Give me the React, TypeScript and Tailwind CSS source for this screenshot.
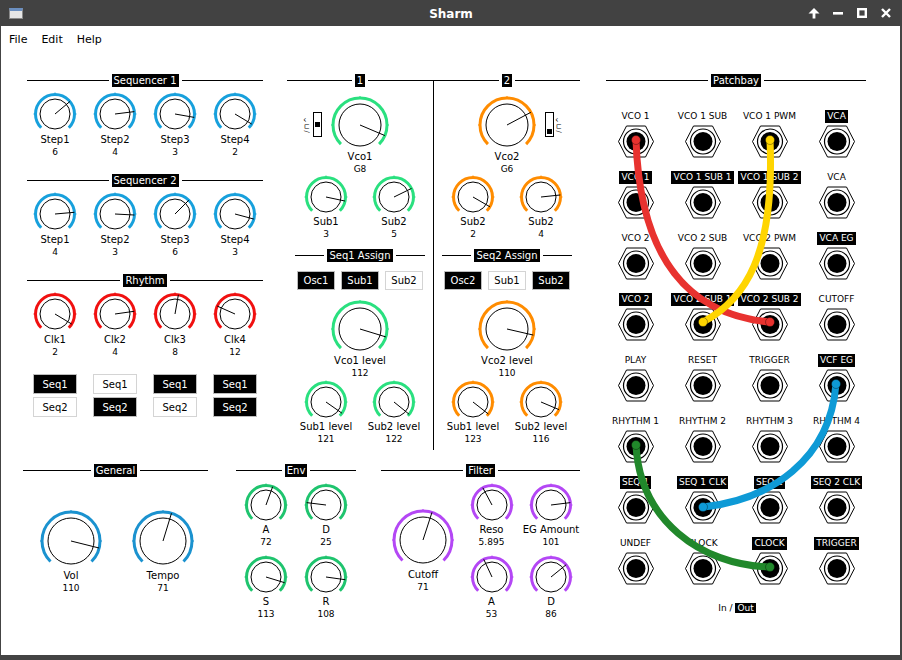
import React from "react";

type Size = "s" | "m" | "l";

const DIM: Record<Size, { R: number; r: number; w: number; c: number; h: number }> = {
  s: { R: 19.5, r: 15, w: 46, c: 23, h: 42 },
  m: { R: 27, r: 21, w: 60, c: 30, h: 56 },
  l: { R: 29, r: 23, w: 66, c: 33, h: 62 },
};

const BLUE = "#17a0dc";
const BLUE2 = "#1b92cf";
const RED = "#f01010";
const GREEN = "#2ae07f";
const GREEN2 = "#1fc46e";
const ORANGE = "#ff8c00";
const PURPLE = "#b447f5";

function Dial({ size, color, angle, h }: { size: Size; color: string; angle: number; h?: number }) {
  const { R, r, w, c } = DIM[size];
  const cx = w / 2;
  const k = R * Math.SQRT1_2;
  const a = (angle * Math.PI) / 180;
  return (
    <svg width={w} height={h ?? DIM[size].h} className="block">
      <path
        d={`M ${cx - k} ${c + k} A ${R} ${R} 0 1 1 ${cx + k} ${c + k}`}
        fill="none"
        stroke={color}
        strokeWidth={3}
      />
      {[180, 90, 0].map((t) => {
        const tr = (t * Math.PI) / 180;
        return (
          <line
            key={t}
            x1={cx + (R + 1) * Math.cos(tr)}
            y1={c - (R + 1) * Math.sin(tr)}
            x2={cx + (R + 2) * Math.cos(tr)}
            y2={c - (R + 2) * Math.sin(tr)}
            stroke={color}
            strokeWidth={1}
          />
        );
      })}
      <circle cx={cx} cy={c} r={r} fill="none" stroke="#000" />
      <line x1={cx} y1={c} x2={cx + R * Math.cos(a)} y2={c - R * Math.sin(a)} stroke="#000" />
    </svg>
  );
}

function Knob({
  label,
  value,
  angle,
  color,
  size = "s",
  h,
  className = "w-[60px]",
}: {
  label: string;
  value: string;
  angle: number;
  color: string;
  size?: Size;
  h?: number;
  className?: string;
}) {
  return (
    <div className={"flex flex-col items-center " + className}>
      <Dial size={size} color={color} angle={angle} h={h} />
      <div className="text-[10px] leading-[12px] whitespace-nowrap">{label}</div>
      <div className="text-[9px] leading-[12px]">{value}</div>
    </div>
  );
}

function Header({ title, className = "" }: { title: string; className?: string }) {
  return (
    <div className={"flex items-center h-[13px] " + className}>
      <div className="flex-1 h-px bg-black" />
      <span className="bg-black text-white text-[10px] leading-[13px] px-[2px] mx-[3px] whitespace-nowrap">
        {title}
      </span>
      <div className="flex-1 h-px bg-black" />
    </div>
  );
}

function Btn({ text, on, className }: { text: string; on: boolean; className: string }) {
  return (
    <div
      className={
        "flex items-center justify-center text-[10px] border " +
        (on ? "bg-black text-white border-[#bdbdbd] " : "bg-white text-black border-[#d4d4d4] ") +
        className
      }
    >
      {text}
    </div>
  );
}

function Switch({ bottom, side }: { bottom?: boolean; side: "l" | "r" }) {
  const marks = (
    <span className="[writing-mode:vertical-rl] rotate-180 text-[7px] leading-[7px] tracking-[1px]">/⊓^</span>
  );
  return (
    <div className="flex items-center gap-[2px]">
      {side === "l" && marks}
      <div className="w-[9px] h-[25px] border border-black flex flex-col items-center">
        <div className={"w-[5px] h-[5px] bg-black " + (bottom ? "mt-auto mb-[2px]" : "mt-[9px]")} />
      </div>
      {side === "r" && marks}
    </div>
  );
}

function Jack() {
  return (
    <svg width={40} height={35} className="block mt-[1px]">
      <polygon points="2.5,17.5 10.5,2 29.5,2 37.5,17.5 29.5,33 10.5,33" fill="#fff" stroke="#000" />
      <circle cx={20} cy={17.5} r={12.5} fill="#fff" stroke="#000" strokeWidth={1.2} />
      <circle cx={20} cy={17.5} r={9.5} fill="#000" />
    </svg>
  );
}

const SEQ1: [string, string, number][] = [
  ["Step1", "6", 40],
  ["Step2", "4", 7],
  ["Step3", "3", -10],
  ["Step4", "2", -31],
];
const SEQ2: [string, string, number][] = [
  ["Step1", "4", 5],
  ["Step2", "3", -3],
  ["Step3", "6", 45],
  ["Step4", "3", -15],
];
const CLK: [string, string, number][] = [
  ["Clk1", "2", -31],
  ["Clk2", "4", 8],
  ["Clk3", "8", 80],
  ["Clk4", "12", 156],
];

const PATCH: [string, boolean][][] = [
  [["VCO 1", false], ["VCO 1 SUB", false], ["VCO 1 PWM", false], ["VCA", true]],
  [["VCO 1", true], ["VCO 1 SUB 1", true], ["VCO 1 SUB 2", true], ["VCA", false]],
  [["VCO 2", false], ["VCO 2 SUB", false], ["VCO 2 PWM", false], ["VCA EG", true]],
  [["VCO 2", true], ["VCO 2 SUB 1", true], ["VCO 2 SUB 2", true], ["CUTOFF", false]],
  [["PLAY", false], ["RESET", false], ["TRIGGER", false], ["VCF EG", true]],
  [["RHYTHM 1", false], ["RHYTHM 2", false], ["RHYTHM 3", false], ["RHYTHM 4", false]],
  [["SEQ 1", true], ["SEQ 1 CLK", true], ["SEQ 2", true], ["SEQ 2 CLK", true]],
  [["UNDEF", false], ["CLOCK", false], ["CLOCK", true], ["TRIGGER", true]],
];

const CABLES = [
  { c: "#e8322f", d: "M636 140 C640 260 690 315 770 322", a: [636, 140], b: [770, 322] },
  { c: "#ffd500", d: "M770 140 C775 255 745 300 703 322", a: [770, 140], b: [703, 322] },
  { c: "#0e9ad6", d: "M836 384 C830 460 770 500 703 507", a: [836, 384], b: [703, 507] },
  { c: "#21882b", d: "M636 445 C640 520 700 565 770 567", a: [636, 445], b: [770, 567] },
];

function KnobRow({ items, color }: { items: [string, string, number][]; color: string }) {
  return (
    <div className="grid grid-cols-4 mt-[4px]">
      {items.map(([l, v, a], i) => (
        <Knob key={i} label={l} value={v} angle={a} color={color} h={43} />
      ))}
    </div>
  );
}

function Osc({
  n,
  color,
  vco,
  subs,
  assign,
  levels,
}: {
  n: string;
  color: string;
  vco: [string, string, number];
  subs: [string, string, number][];
  assign: [string, boolean][];
  levels: [string, string, number][];
}) {
  const left = n === "1";
  return (
    <div className="w-[146px] flex flex-col">
      <Header title={n} />
      <div className="flex mt-[8px]">
        <div className="w-[43px] flex justify-end items-start pt-[17px] pr-[8px]">
          {left && <Switch side="l" />}
        </div>
        <Knob label={vco[0]} value={vco[1]} angle={vco[2]} color={color} size="m" />
        <div className="w-[43px] flex items-start pt-[17px] pl-[8px]">{!left && <Switch side="r" bottom />}</div>
      </div>
      <div className="flex justify-center gap-[8px] mt-[-1px]">
        {subs.map(([l, v, a], i) => (
          <Knob key={i} label={l} value={v} angle={a} color={color} />
        ))}
      </div>
      <Header title={`Seq${n} Assign`} className="mt-[9px] mx-[8px]" />
      <div className="flex gap-[6px] pl-[10px] mt-[9px]">
        {assign.map(([t, on], i) => (
          <Btn key={i} text={t} on={on} className="w-[38px] h-[19px]" />
        ))}
      </div>
      <div className="flex justify-center mt-[9px]">
        <Knob label={levels[0][0]} value={levels[0][1]} angle={levels[0][2]} color={color} size="m" />
      </div>
      <div className="flex justify-center gap-[8px]">
        {levels.slice(1).map(([l, v, a], i) => (
          <Knob key={i} label={l} value={v} angle={a} color={color} />
        ))}
      </div>
    </div>
  );
}

export default function App() {
  return (
    <div className="relative w-[902px] h-[660px] bg-white overflow-hidden font-['DejaVu_Sans',sans-serif] text-black shadow-[inset_1px_0_0_#444,inset_-2px_0_0_#444]">
      {/* title bar */}
      <div className="h-[26px] bg-[#424242] grid grid-cols-[1fr_auto_1fr] items-center">
        <div className="pl-[9px]">
          <div className="w-[14px] h-[11px] bg-[#e6e6e6] border border-[#8a8a8a] border-t-[3px] border-t-[#6b8fc0]" />
        </div>
        <div className="text-white font-bold text-[12px] pt-[1px]">Sharm</div>
        <div className="flex justify-end pr-[4px] text-white">
          <div className="w-[24px] flex justify-center">
            <svg width="12" height="12" viewBox="0 0 12 12">
              <polygon points="6,1 0.5,6.5 11.5,6.5" fill="#fff" />
              <rect x="4.6" y="6" width="2.8" height="5.5" fill="#fff" />
            </svg>
          </div>
          <div className="w-[24px] flex justify-center">
            <svg width="12" height="12" viewBox="0 0 12 12">
              <rect x="1" y="5" width="10" height="2.6" fill="#fff" />
            </svg>
          </div>
          <div className="w-[24px] flex justify-center">
            <svg width="12" height="12" viewBox="0 0 12 12">
              <rect x="2.2" y="2.2" width="7.6" height="7.6" fill="none" stroke="#fff" strokeWidth="2.4" />
            </svg>
          </div>
          <div className="w-[24px] flex justify-center">
            <svg width="12" height="12" viewBox="0 0 12 12">
              <path d="M2 2 L10 10 M10 2 L2 10" stroke="#fff" strokeWidth="2.4" />
            </svg>
          </div>
        </div>
      </div>

      {/* menu */}
      <div className="h-[26px] flex items-center pl-[2px] pt-[2px] text-[11px]">
        <span className="px-[7px]">File</span>
        <span className="px-[7px]">Edit</span>
        <span className="px-[7px]">Help</span>
      </div>

      <div className="flex pt-[22px]">
        <div className="ml-[23px] w-[557px] flex flex-col">
          <div className="flex h-[376px]">
            {/* sequencers and rhythm */}
            <div className="ml-[2px] w-[240px] flex flex-col">
              <Header title="Sequencer 1" className="mx-[2px]" />
              <KnobRow items={SEQ1} color={BLUE} />
              <Header title="Sequencer 2" className="mx-[2px] mt-[16px]" />
              <KnobRow items={SEQ2} color={BLUE} />
              <Header title="Rhythm" className="mx-[2px] mt-[16px]" />
              <KnobRow items={CLK} color={RED} />
              <div className="grid grid-cols-4 mt-[16px]">
                {[true, false, true, true].map((on, i) => (
                  <div key={i} className="flex justify-center">
                    <Btn text="Seq1" on={on} className="w-[44px] h-[20px]" />
                  </div>
                ))}
              </div>
              <div className="grid grid-cols-4 mt-[3px]">
                {[false, true, false, true].map((on, i) => (
                  <div key={i} className="flex justify-center">
                    <Btn text="Seq2" on={on} className="w-[44px] h-[20px]" />
                  </div>
                ))}
              </div>
            </div>

            {/* oscillators */}
            <div className="ml-[22px] flex">
              <Osc
                n="1"
                color={GREEN}
                vco={["Vco1", "G8", -23]}
                subs={[
                  ["Sub1", "3", -12],
                  ["Sub2", "5", 26],
                ]}
                assign={[
                  ["Osc1", true],
                  ["Sub1", true],
                  ["Sub2", false],
                ]}
                levels={[
                  ["Vco1 level", "112", -17],
                  ["Sub1 level", "121", -35],
                  ["Sub2 level", "122", -39],
                ]}
              />
              <div className="w-px h-[370px] bg-black mt-[6px]" />
              <Osc
                n="2"
                color={ORANGE}
                vco={["Vco2", "G6", 28]}
                subs={[
                  ["Sub2", "2", -30],
                  ["Sub2", "4", 6],
                ]}
                assign={[
                  ["Osc2", true],
                  ["Sub1", false],
                  ["Sub2", true],
                ]}
                levels={[
                  ["Vco2 level", "110", -13],
                  ["Sub1 level", "123", -38],
                  ["Sub2 level", "116", -23],
                ]}
              />
            </div>
          </div>

          {/* bottom row */}
          <div className="flex mt-[14px]">
            <div className="w-[185px] flex flex-col">
              <Header title="General" />
              <div className="flex pl-[13px] gap-[22px] mt-[31px]">
                <Knob label="Vol" value="110" angle={-14} color={BLUE2} size="l" className="w-[70px]" />
                <Knob label="Tempo" value="71" angle={73} color={BLUE2} size="l" className="w-[70px]" />
              </div>
            </div>
            <div className="ml-[28px] w-[120px] flex flex-col">
              <Header title="Env" />
              <div className="grid grid-cols-2 gap-y-[6px] mt-[5px]">
                <Knob label="A" value="72" angle={70} color={GREEN2} />
                <Knob label="D" value="25" angle={173} color={GREEN2} />
                <Knob label="S" value="113" angle={-17} color={GREEN2} />
                <Knob label="R" value="108" angle={-8} color={GREEN2} />
              </div>
            </div>
            <div className="ml-[25px] w-[199px] flex flex-col">
              <Header title="Filter" />
              <div className="flex">
                <div className="ml-[7px] mt-[30px]">
                  <Knob label="Cutoff" value="71" angle={72} color={PURPLE} size="l" className="w-[70px]" />
                </div>
                <div className="ml-[3px] mt-[5px] grid grid-cols-2 gap-y-[6px]">
                  <Knob label="Reso" value="5.895" angle={118} color={PURPLE} className="w-[61px]" />
                  <Knob label="EG Amount" value="101" angle={7} color={PURPLE} className="w-[61px]" />
                  <Knob label="A" value="53" angle={115} color={PURPLE} className="w-[61px]" />
                  <Knob label="D" value="86" angle={39} color={PURPLE} className="w-[61px]" />
                </div>
              </div>
            </div>
          </div>
        </div>

        {/* patchbay */}
        <div className="ml-[22px] w-[268px] flex flex-col">
          <Header title="Patchbay" className="mx-[4px]" />
          <div className="grid grid-cols-4 gap-y-[12px] mt-[23px]">
            {PATCH.flat().map(([t, boxed], i) => (
              <div key={i} className="flex flex-col items-center">
                <span
                  className={
                    "text-[9px] leading-[13px] h-[13px] whitespace-nowrap " +
                    (boxed ? "bg-black text-white px-[2px]" : "")
                  }
                >
                  {t}
                </span>
                <Jack />
              </div>
            ))}
          </div>
          <div className="mt-[16px] text-center text-[9px] leading-[13px] pl-[2px]">
            In / <span className="bg-black text-white px-[2px]">Out</span>
          </div>
        </div>
      </div>

      {/* patch cables */}
      <svg className="absolute left-0 top-0 pointer-events-none" width={902} height={660}>
        {CABLES.map((cb, i) => (
          <g key={i}>
            <path d={cb.d} fill="none" stroke={cb.c} strokeWidth={7} strokeLinecap="round" />
            <circle cx={cb.a[0]} cy={cb.a[1]} r={4.5} fill={cb.c} stroke="#00000055" />
            <circle cx={cb.b[0]} cy={cb.b[1]} r={4.5} fill={cb.c} stroke="#00000055" />
          </g>
        ))}
      </svg>

      <div className="absolute left-0 bottom-0 w-full h-[5px] bg-[#444]" />
    </div>
  );
}
